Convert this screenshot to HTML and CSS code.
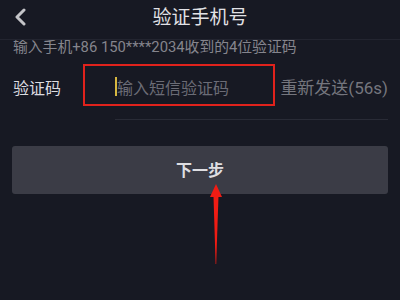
FILE: index.html
```html
<!DOCTYPE html>
<html lang="zh">

<head>
	<meta charset="UTF-8">
	<title>验证手机号</title>
	<link rel="stylesheet" href="styles.css">
</head>

<body>
	<div class="page">
		<div class="top_bar">
			<svg class="back_icon" width="14" height="18" viewBox="0 0 14 18">
				<polyline points="11,2 4,9 11,16" fill="none" stroke="#c4c4c8" stroke-width="3" stroke-linecap="round" stroke-linejoin="round"/>
			</svg>
			<h3 class="top_title">验证手机号</h3>
		</div>

		<p class="hint">输入手机+86 150****2034收到的4位验证码</p>

		<div class="code_row">
			<label class="code_label">验证码</label>
			<div class="code_field">
				<span class="cursor"></span>
				<span class="placeholder">输入短信验证码</span>
				<span class="resend">重新发送(56s)</span>
			</div>
			<!-- annotation box -->
			<div class="mark_box"></div>
		</div>

		<button class="next_button">下一步</button>

		<!-- annotation arrow -->
		<svg class="mark_arrow" width="16" height="84" viewBox="0 0 16 84">
			<polygon points="8,0 2,13 14,13" fill="#f01c14"/>
			<polygon points="5.5,12 10.5,12 8.2,80 7.6,80" fill="#f01c14"/>
		</svg>
	</div>
</body>

</html>
```

FILE: styles.css
```css
* {
	box-sizing: border-box;
	font-family: Roboto, "Noto Sans CJK SC", sans-serif;
}

body {
	margin: 0;
	background-color: #171923;
}

.page {
	position: relative;
	width: 400px;
	height: 300px;
	overflow: hidden;
}

.top_bar {
	position: relative;
	height: 40px;
	display: flex;
	align-items: center;
	justify-content: center;
	border-bottom: 1px solid #232530;
}

.back_icon {
	position: absolute;
	left: 13px;
	top: 8px;
}

.top_title {
	margin: 0;
	margin-top: -8px;
	font-size: 19px;
	font-weight: normal;
	color: #e2e2e6;
}

.hint {
	margin: 0;
	padding-left: 13px;
	height: 18px;
	line-height: 15px;
	font-size: 14.8px;
	color: #85858d;
}

.code_row {
	position: relative;
	display: flex;
	margin: 0 12px 0 13px;
}

.code_label {
	width: 102px;
	padding-top: 20px;
	font-size: 16px;
	line-height: 22px;
	color: #dcdce0;
}

.code_field {
	flex: 1;
	display: flex;
	align-items: center;
	height: 62px;
	padding-bottom: 4px;
	border-bottom: 1px solid #292b36;
}

.cursor {
	width: 2px;
	height: 19px;
	background-color: #d6b740;
}

.placeholder {
	flex: 1;
	font-size: 16px;
	color: #6b6c76;
}

.resend {
	font-size: 17px;
	color: #75767e;
}

.mark_box {
	position: absolute;
	left: 70px;
	top: 6px;
	width: 192px;
	height: 42px;
	border: 2px solid #e0221c;
}

.next_button {
	display: block;
	width: 376px;
	height: 48px;
	margin: 26px 12px 0 12px;
	border: 0;
	border-radius: 3px;
	background-color: #3b3c46;
	color: #dedee2;
	font-size: 16px;
	font-weight: bold;
	padding-bottom: 4px;
}

.mark_arrow {
	position: absolute;
	left: 208px;
	top: 184px;
}
```
